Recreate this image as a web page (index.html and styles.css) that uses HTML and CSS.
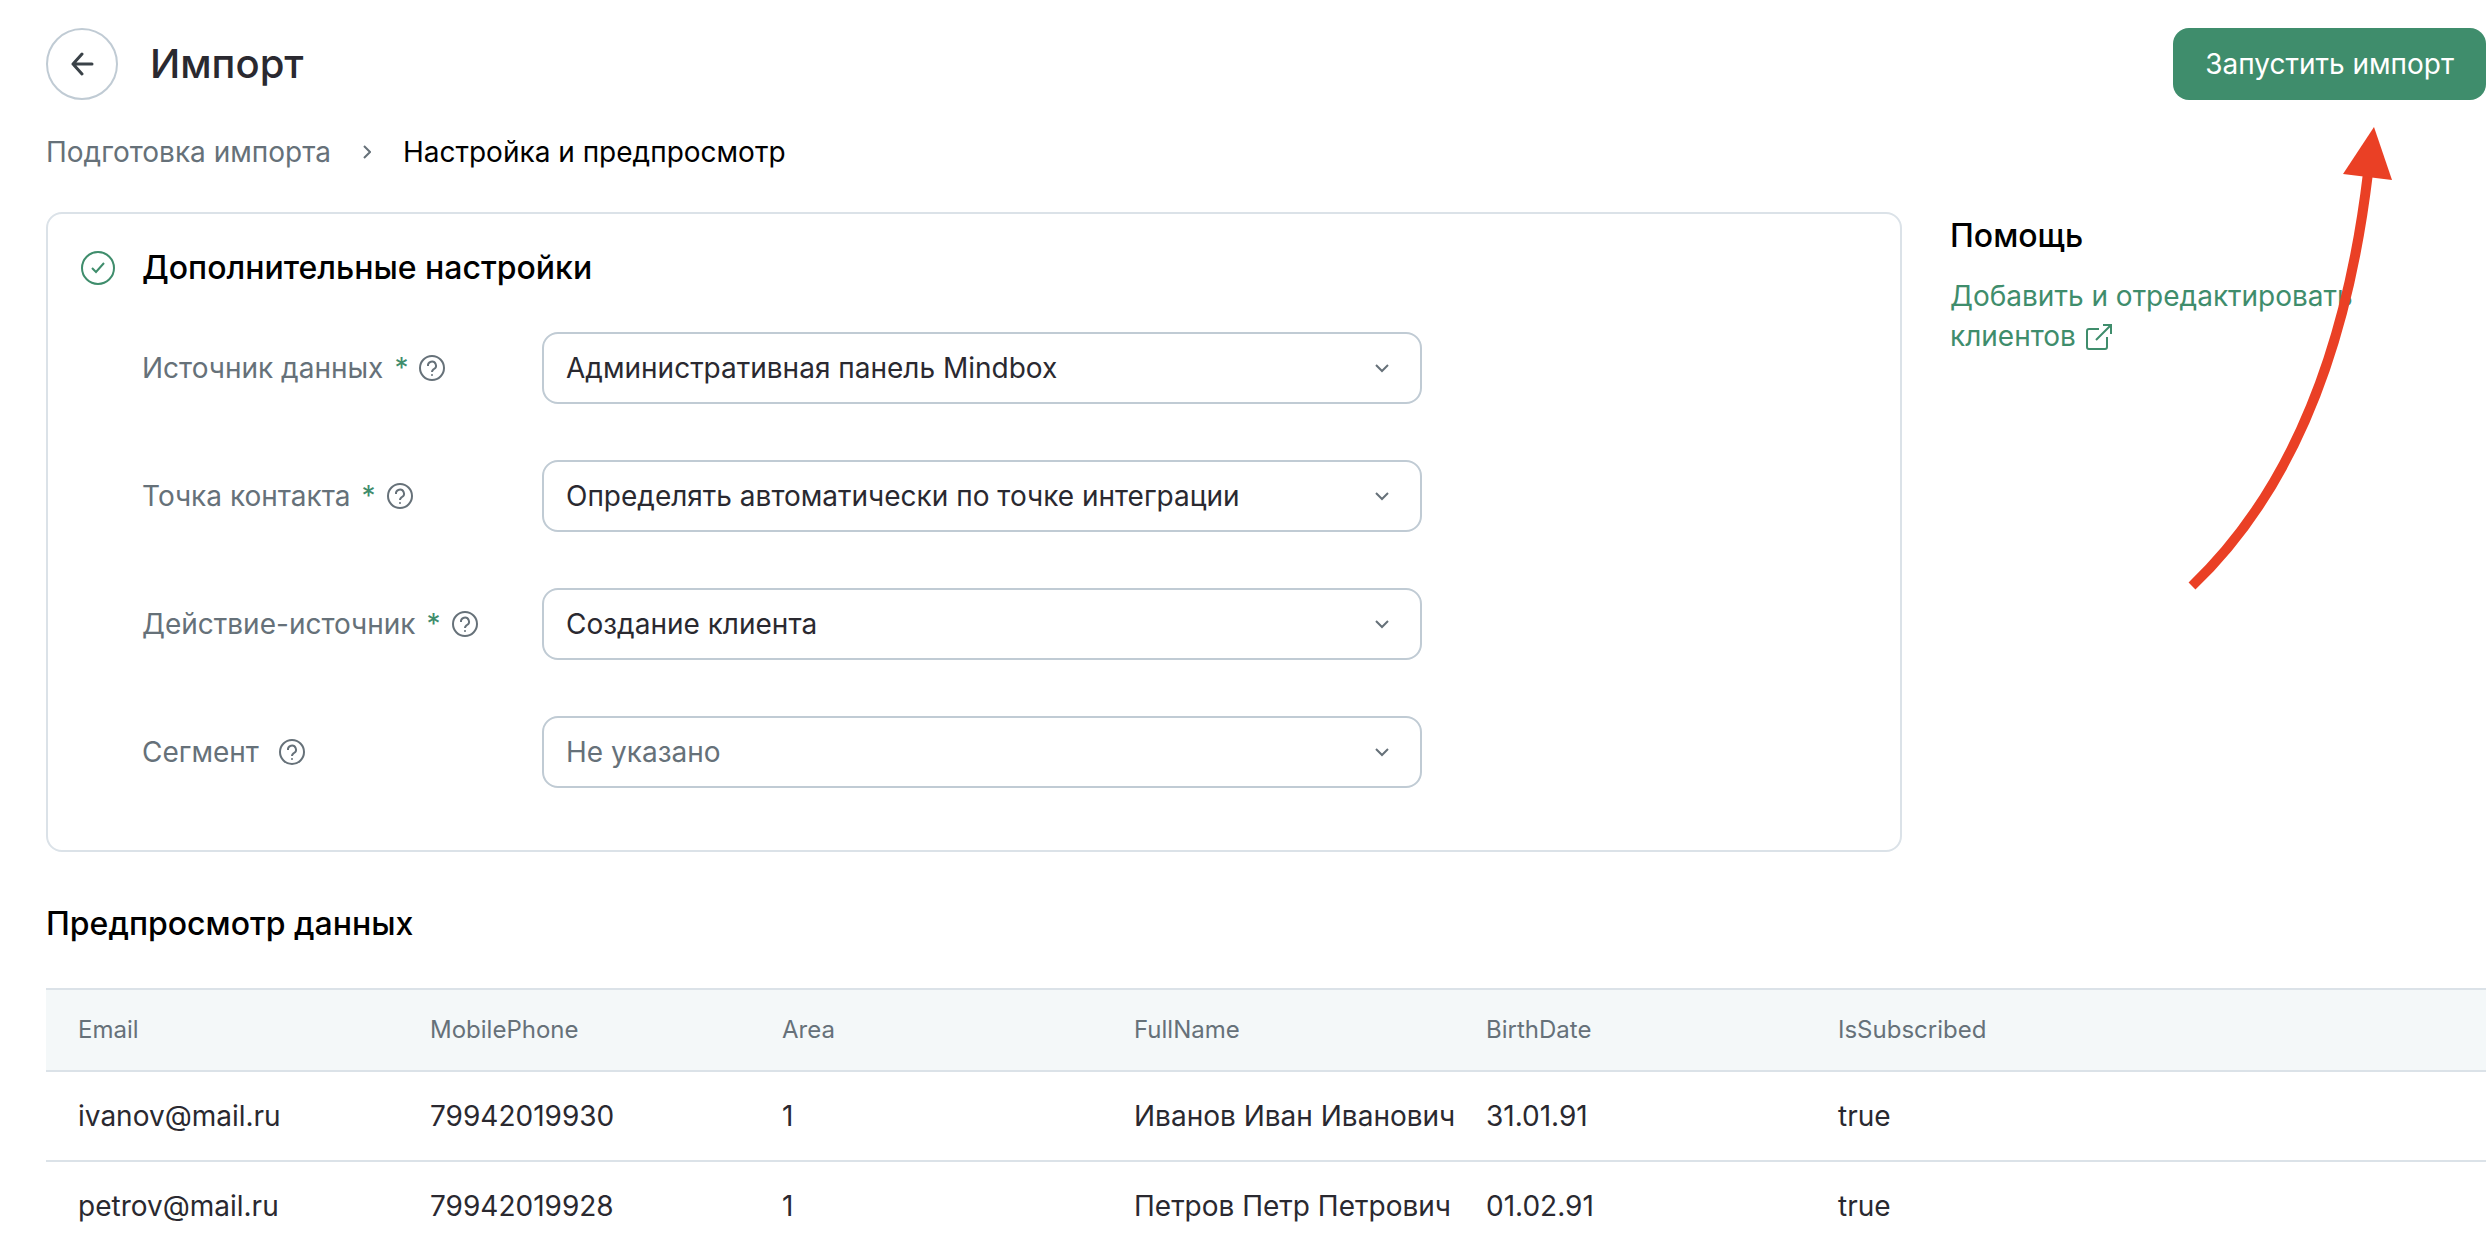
FILE: index.html
```html
<!DOCTYPE html>
<html lang="ru">
<head>
  <meta charset="UTF-8">
  <title>Импорт</title>
  <link rel="stylesheet" href="styles.css">
</head>
<body>
  <header class="header">
    <button class="back" type="button" aria-label="Назад">
      <svg width="24" height="24" viewBox="0 0 24 24"><path d="M22 12H3M12 2L3 12l9 10"/></svg>
    </button>
    <h1>Импорт</h1>
    <button class="start" type="button">Запустить импорт</button>
  </header>

  <nav class="breadcrumbs">
    <a href="#">Подготовка импорта</a>
    <svg width="8" height="14" viewBox="0 0 8 14"><path d="M1 1l6 6-6 6"/></svg>
    <span>Настройка и предпросмотр</span>
  </nav>

  <main>
    <div class="columns">
      <section class="card">
        <svg class="check" width="34" height="34" viewBox="0 0 34 34">
          <circle cx="17" cy="17" r="16"/>
          <path d="M11 17l4 4 8-9"/>
        </svg>
        <form class="settings">
          <h2>Дополнительные настройки</h2>
          <div class="field">
            <div class="label">
              <label for="source">Источник данных</label>
              <span class="required">*</span>
              <svg class="hint" width="26" height="26" viewBox="0 0 26 26"><circle cx="13" cy="13" r="12"/><path d="M9 11a4 4 0 1 1 6 3c-1 1-2 1-2 3"/><circle class="dot" cx="13" cy="20" r="1"/></svg>
            </div>
            <select id="source"><option>Административная панель Mindbox</option></select>
          </div>
          <div class="field">
            <div class="label">
              <label for="contact">Точка контакта</label>
              <span class="required">*</span>
              <svg class="hint" width="26" height="26" viewBox="0 0 26 26"><circle cx="13" cy="13" r="12"/><path d="M9 11a4 4 0 1 1 6 3c-1 1-2 1-2 3"/><circle class="dot" cx="13" cy="20" r="1"/></svg>
            </div>
            <select id="contact"><option>Определять автоматически по точке интеграции</option></select>
          </div>
          <div class="field">
            <div class="label">
              <label for="action">Действие-источник</label>
              <span class="required">*</span>
              <svg class="hint" width="26" height="26" viewBox="0 0 26 26"><circle cx="13" cy="13" r="12"/><path d="M9 11a4 4 0 1 1 6 3c-1 1-2 1-2 3"/><circle class="dot" cx="13" cy="20" r="1"/></svg>
            </div>
            <select id="action"><option>Создание клиента</option></select>
          </div>
          <div class="field">
            <div class="label optional">
              <label for="segment">Сегмент</label>
              <svg class="hint" width="26" height="26" viewBox="0 0 26 26"><circle cx="13" cy="13" r="12"/><path d="M9 11a4 4 0 1 1 6 3c-1 1-2 1-2 3"/><circle class="dot" cx="13" cy="20" r="1"/></svg>
            </div>
            <select id="segment" class="empty"><option>Не указано</option></select>
          </div>
        </form>
      </section>

      <aside class="help">
        <h2>Помощь</h2>
        <a href="#">Добавить и отредактировать клиентов
          <svg width="26" height="26" viewBox="0 0 26 26"><path d="M13 5H3a2 2 0 0 0-2 2v16a2 2 0 0 0 2 2h16a2 2 0 0 0 2-2V13M17 1h8v9M25 1L10 16"/></svg>
        </a>
      </aside>
    </div>

    <section class="preview">
      <h2>Предпросмотр данных</h2>
      <table>
        <thead>
          <tr><th>Email</th><th>MobilePhone</th><th>Area</th><th>FullName</th><th>BirthDate</th><th>IsSubscribed</th></tr>
        </thead>
        <tbody>
          <tr><td>ivanov@mail.ru</td><td>79942019930</td><td>1</td><td>Иванов Иван Иванович</td><td>31.01.91</td><td>true</td></tr>
          <tr><td>petrov@mail.ru</td><td>79942019928</td><td>1</td><td>Петров Петр Петрович</td><td>01.02.91</td><td>true</td></tr>
        </tbody>
      </table>
    </section>
  </main>

  <svg class="pointer" width="206" height="466" viewBox="0 0 206 466">
    <path class="shaft" d="M6 460Q149 324 182 47"/>
    <path class="head" d="M188 1l18 53-49-6z"/>
  </svg>
</body>
</html>
```

FILE: styles.css
```css
* {
  box-sizing: border-box;
}
body {
  position: relative;
  margin: 0;
  padding: 28px 0 0 46px;
  font-family: Inter, "Noto Sans", sans-serif;
  font-size: 28px;
  line-height: 40px;
  color: #2a2930;
  background: #fff;
  overflow: hidden;
}
h1, h2 {
  margin: 0;
  font-weight: 500;
}
h1 {
  font-size: 40px;
  line-height: 48px;
}
h2 {
  font-size: 32px;
  color: #000;
}
svg {
  fill: none;
  stroke: currentColor;
  stroke-width: 2;
  flex: none;
}
a {
  color: #3f8d6c;
  text-decoration: none;
}
button, select {
  font: inherit;
}

.header {
  display: flex;
  align-items: center;
  gap: 32px;
}
.back {
  display: flex;
  align-items: center;
  justify-content: center;
  width: 72px;
  height: 72px;
  padding: 0;
  border: 2px solid #c0cbd4;
  border-radius: 50%;
  background: #fff;
  color: #3a4248;
}
.back svg {
  stroke-width: 3;
  stroke-linecap: round;
  stroke-linejoin: round;
}
.start {
  height: 72px;
  margin-left: auto;
  padding: 0 32px;
  border: 0;
  border-radius: 16px;
  background: #3f8d6c;
  color: #fff;
}

.breadcrumbs {
  display: flex;
  align-items: center;
  gap: 32px;
  margin-top: 32px;
  color: #667179;
}
.breadcrumbs a {
  color: #667179;
}
.breadcrumbs span {
  color: #000;
}

.columns {
  display: flex;
  gap: 48px;
  margin-top: 40px;
}
.card {
  display: flex;
  flex: 1;
  gap: 27px;
  padding: 34px 32px 62px 33px;
  border: 2px solid #dbe2e8;
  border-radius: 16px;
}
.check {
  margin-top: 3px;
  color: #3f8d6c;
}
.settings {
  flex: 1;
}
.settings h2 {
  margin-bottom: 44px;
}
.field {
  display: flex;
  align-items: center;
}
.field + .field {
  margin-top: 56px;
}
.label {
  display: flex;
  align-items: center;
  gap: 11px;
  width: 400px;
  color: #667179;
}
.optional {
  gap: 20px;
}
.required {
  color: #3f8d6c;
}
.hint .dot {
  fill: currentColor;
  stroke: none;
}
select {
  flex: 0 1 880px;
  height: 72px;
  padding: 0 64px 0 22px;
  border: 2px solid #c0cbd4;
  border-radius: 16px;
  color: #2a2930;
  appearance: none;
  background: #fff url("data:image/svg+xml,%3Csvg xmlns='http://www.w3.org/2000/svg' width='14' height='9' fill='none' stroke='%23667179' stroke-width='2'%3E%3Cpath d='M1 1l6 6 6-6'/%3E%3C/svg%3E") no-repeat right 31px center;
}
.empty {
  color: #667179;
}

.help {
  width: 536px;
  padding-right: 96px;
}
.help h2 {
  margin: 4px 0 20px;
}
.help a {
  display: block;
}
.help svg {
  margin-left: 2px;
  vertical-align: -4px;
}

.preview {
  margin-top: 52px;
}
.preview h2 {
  margin-bottom: 44px;
}
table {
  width: 100%;
  table-layout: fixed;
  border-collapse: separate;
  border-spacing: 0;
}
th, td {
  padding: 24px 0 24px 32px;
  border-bottom: 2px solid #dbe2e8;
  text-align: left;
  font-weight: 400;
  white-space: nowrap;
}
th {
  width: 352px;
  padding: 20px 0 20px 32px;
  border-top: 2px solid #dbe2e8;
  background: #f4f8f9;
  font-size: 24px;
  color: #667179;
}
th:last-child {
  width: auto;
}

/* arrow drawn over the page, points at the start button */
.pointer {
  position: absolute;
  top: 126px;
  right: 94px;
  color: #ea4025;
  pointer-events: none;
}
.shaft {
  stroke-width: 10;
}
.head {
  fill: currentColor;
  stroke: none;
}
```
